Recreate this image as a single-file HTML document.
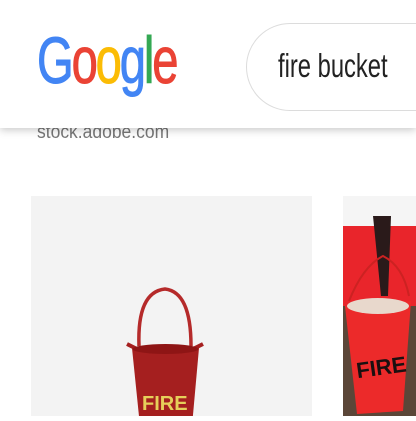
<!DOCTYPE html>
<html><head><meta charset="utf-8"><style>
html,body{margin:0;padding:0;width:416px;height:416px;overflow:hidden;background:#fff;font-family:"Liberation Sans",sans-serif}
.hdr{position:absolute;left:0;top:0;width:416px;height:128px;background:#fff;box-shadow:0 2px 8px rgba(0,0,0,.22);z-index:2}
.logo{position:absolute;left:37px;top:27px;font-size:66px;letter-spacing:-3px;transform:scaleX(.715);transform-origin:left top;font-weight:normal;line-height:1}
.logo span{-webkit-text-stroke:1px}
.search{position:absolute;left:246px;top:23px;width:260px;height:86px;border:1px solid #dcdcdc;border-radius:44px;background:#fff}
.q{position:absolute;left:278px;top:47px;font-size:33px;color:#222;transform:scaleX(.72);transform-origin:left top;white-space:nowrap}
.src{position:absolute;left:37px;top:122px;font-size:19px;color:#777;z-index:1;transform:scaleX(.92);transform-origin:left top}
.img1{position:absolute;left:31px;top:196px;width:281px;height:220px;background:#f3f3f3}
.img2{position:absolute;left:343px;top:196px;width:73px;height:220px;background:#f5f5f5;overflow:hidden}
</style></head><body>
<div class="hdr">
<div class="logo"><span style="color:#4285f4">G</span><span style="color:#ea4335">o</span><span style="color:#fbbc05">o</span><span style="color:#4285f4">g</span><span style="color:#34a853">l</span><span style="color:#ea4335">e</span></div>
<div class="search"></div>
<div class="q">fire bucket</div>
</div>
<div class="src">stock.adobe.com</div>
<div class="img1">
<svg width="281" height="220" viewBox="0 0 281 220">
<path d="M108 150 Q106 96 134 93 Q160 96 160 150" fill="none" stroke="#b52a2a" stroke-width="3.5"/>
<path d="M96 148 L106 153 M172 148 L162 153" stroke="#a51f1f" stroke-width="4"/>
<path d="M101 152 L168 152 L161 230 L109 230 Z" fill="#a51f1f"/>
<ellipse cx="134.5" cy="153" rx="33" ry="5" fill="#8e1515"/>
<text x="111" y="214" font-family="Liberation Sans" font-weight="bold" font-size="20" fill="#e6cf5a">FIRE</text>
</svg>
</div>
<div class="img2">
<svg width="73" height="220" viewBox="0 0 73 220">
<rect x="0" y="30" width="73" height="190" fill="#e9252b"/>
<rect x="0" y="110" width="73" height="110" fill="#5b4638"/>
<path d="M30 20 L48 20 L45 100 L38 100 Z" fill="#2a1a1a"/>
<path d="M6 105 Q20 70 40 60 Q60 70 66 100" fill="none" stroke="#c22" stroke-width="2"/>
<path d="M2 110 L68 105 L60 215 L14 218 Z" fill="#ec2a2a"/>
<ellipse cx="35" cy="110" rx="31" ry="8" fill="#e8d8cc"/>
<text x="13" y="180" font-family="Liberation Sans" font-weight="bold" font-size="22" fill="#1a1010" transform="rotate(-8 30 170)">FIRE</text>
</svg>
</div>
</body></html>
